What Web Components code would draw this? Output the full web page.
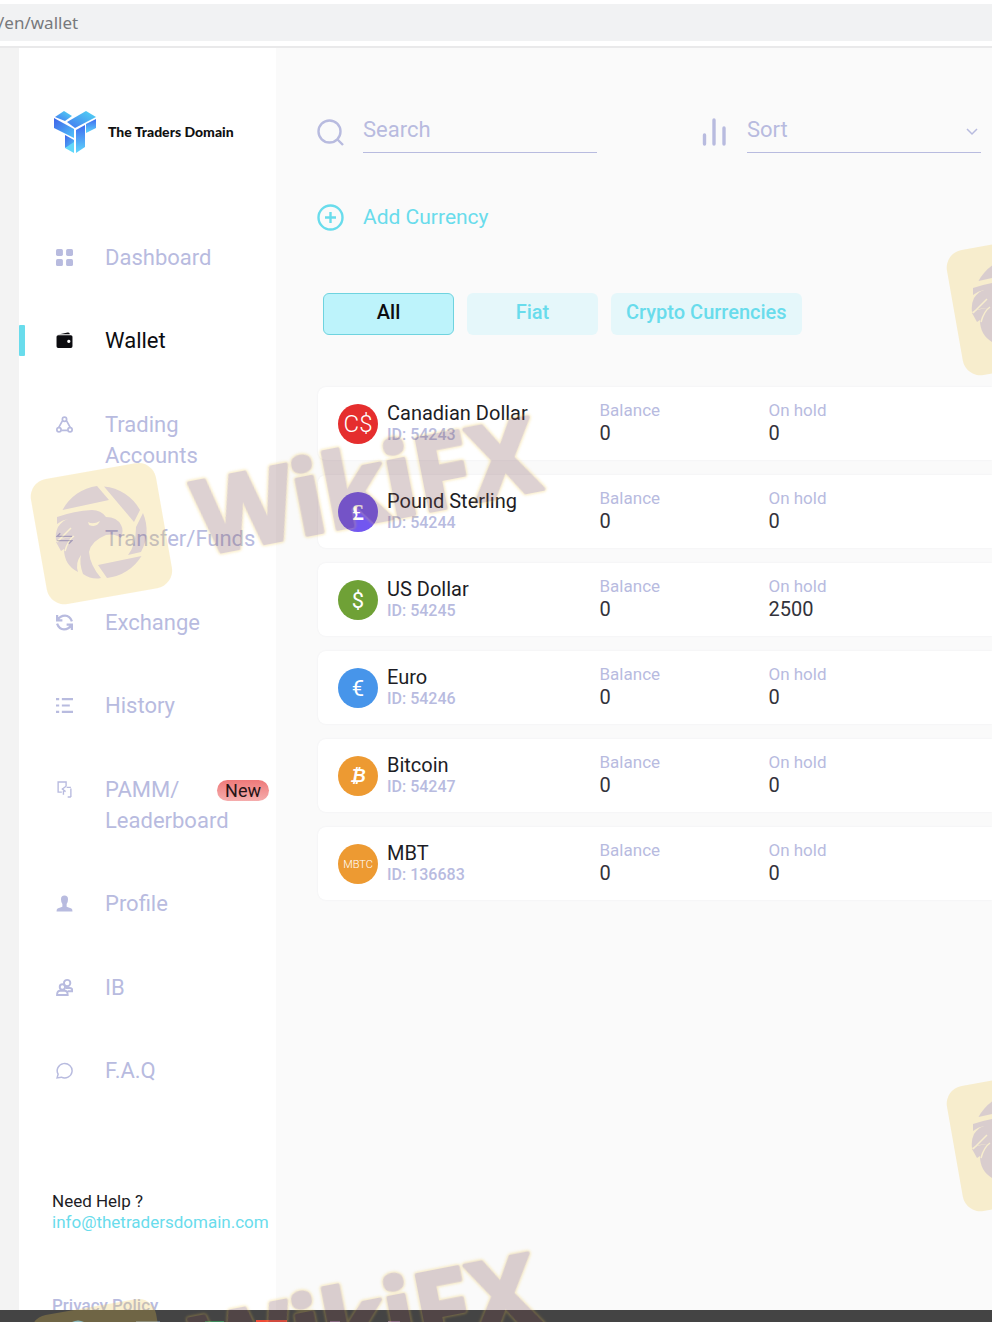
<!DOCTYPE html>
<html lang="en">
<head>
<meta charset="utf-8">
<title>Wallet</title>
<style>
  body {
    --accent: #69dcec;
    --muted: #b8bbdf;
    --page: #fafafa;
    margin: 0;
    height: 100vh;
    overflow: hidden;
    display: flex;
    flex-direction: column;
    position: relative;
    background: var(--page);
    font-family: Roboto, "Liberation Sans", sans-serif;
    color: #1d1d25;
  }
  .layout {
    display: flex;
    flex: 1;
    min-height: 0;
  }
</style>
</head>
<body>

<template id="address-bar">
  <style>
    :host {
      display: block;
      flex: none;
      padding: 4px 0 5px;
      background: #fff;
      border-bottom: 2px solid #e9e9ea;
    }
    .url {
      height: 37px;
      line-height: 37px;
      background: #f1f2f3;
      color: #77797c;
      font-family: "Noto Sans", sans-serif;
      font-size: 17px;
      text-indent: -2px;
    }
  </style>
  <div class="url"><slot></slot></div>
</template>

<template id="side-bar">
  <style>
    :host {
      display: flex;
      flex: none;
      flex-direction: column;
      box-sizing: border-box;
      width: 276px;
      padding-top: 59px;
      border-left: 19px solid #f3f3f3;
      background: #fff;
    }
    nav {
      display: flex;
      flex: 1;
      flex-direction: column;
      justify-content: space-between;
      padding: 86px 0 105px;
    }
    footer {
      display: flex;
      flex-direction: column;
      margin-bottom: -6px;
      padding-left: 33px;
      font-size: 17px;
      line-height: 21px;
    }
    .mail { color: var(--accent); text-decoration: none; }
    .policy {
      margin-top: 62px;
      color: var(--muted);
      font-weight: 500;
      text-decoration: none;
    }
  </style>
  <slot name="logo"></slot>
  <nav><slot></slot></nav>
  <footer>
    <span>Need Help ?</span>
    <a class="mail" href="mailto:info@thetradersdomain.com">info@thetradersdomain.com</a>
    <a class="policy" href="#privacy">Privacy Policy</a>
  </footer>
</template>

<template id="brand-logo">
  <style>
    :host {
      display: flex;
      align-items: center;
      gap: 11px;
      height: 49px;
      padding-left: 34px;
      font: 900 14px/20px Lato, sans-serif;
      color: #111;
    }
  </style>
  <svg width="44" height="44" viewBox="0 0 44 44" aria-hidden="true">
    <defs>
      <linearGradient id="a" x1="0" y1="0" x2="1" y2="1"><stop offset="0" stop-color="#3f63e8"/><stop offset="1" stop-color="#4fc3fa"/></linearGradient>
      <linearGradient id="b" x1="0" y1="1" x2="1" y2="0"><stop offset="0" stop-color="#4377f0"/><stop offset="1" stop-color="#52d8f4"/></linearGradient>
      <linearGradient id="c" x1="0" y1="0" x2="0" y2="1"><stop offset="0" stop-color="#3f6bf0"/><stop offset="1" stop-color="#5fd6fb"/></linearGradient>
    </defs>
    <path d="M2 7 11 1 19 6 12 11Z" fill="url(#b)"/>
    <path d="M1 8 21 19V28L1 18Z" fill="url(#a)"/>
    <path d="M14 12 33 1 43 7 22 18Z" fill="url(#b)"/>
    <path d="M23 20 32 15V37L23 43Z" fill="url(#c)"/>
    <path d="M33 14 43 9V18L33 23Z" fill="url(#c)"/>
    <path d="M12 25 21 30V35L12 38Z" fill="url(#a)"/>
    <path d="M12 38 21 32V43Z" fill="#62d8fa"/>
  </svg>
  <span><slot></slot></span>
</template>

<template id="nav-item">
  <style>
    :host { display: block; color: var(--muted); }
    :host([active]) { color: #0c0c10; }
    a {
      display: flex;
      position: relative;
      color: inherit;
      font-size: 22px;
      line-height: 31px;
      text-decoration: none;
    }
    i { width: 6px; border-radius: 1px; }
    :host([active]) i { background: var(--accent); }
    ::slotted(svg) {
      flex: none;
      width: 17px;
      height: 31px;
      margin: 0 32px 0 31px;
    }
    ::slotted(b) {
      position: absolute;
      top: 6px;
      right: 7px;
      padding: 0 8px;
      border-radius: 11px;
      background: linear-gradient(#ee7979, #f5adad);
      color: #241416;
      font-size: 18px;
      font-weight: 400;
      line-height: 21px;
    }
  </style>
  <a href="#"><i></i><slot name="icon"></slot><span><slot></slot></span><slot name="badge"></slot></a>
</template>

<template id="wallet-tools">
  <style>
    :host {
      display: flex;
      justify-content: space-between;
      gap: 24px;
      padding: 0 11px 0 41px;
      color: var(--muted);
    }
    label {
      display: flex;
      flex: 0 1 280px;
      align-items: center;
      position: relative;
      min-width: 0;
    }
    svg { flex: none; }
    input, select {
      flex: 1;
      box-sizing: border-box;
      min-width: 0;
      height: 42px;
      margin: 0 0 0 19px;
      padding: 0 0 4px;
      border: 0;
      border-bottom: 1px solid var(--muted);
      border-radius: 0;
      outline: 0;
      appearance: none;
      background: none;
      color: inherit;
      font: 22px/30px Roboto, sans-serif;
    }
    input::placeholder { color: inherit; opacity: 1; }
    .arrow {
      position: absolute;
      right: 3px;
      pointer-events: none;
    }
  </style>
  <label>
    <svg width="27" height="27" viewBox="0 0 27 27" fill="none" stroke="currentColor" stroke-width="2.400" aria-hidden="true"><circle cx="12.500" cy="12.500" r="11"/><path d="m20.500 20.500 5.500 5.500"/></svg>
    <input type="search" placeholder="Search" aria-label="Search">
  </label>
  <label>
    <svg width="27" height="30" viewBox="0 0 27 30" stroke="currentColor" stroke-width="3.400" stroke-linecap="round" aria-hidden="true"><path d="M3.500 18v9M13 3v24M23 11v16"/></svg>
    <select aria-label="Sort"><option>Sort</option></select>
    <svg class="arrow" width="12" height="8" viewBox="0 0 12 8" fill="none" stroke="currentColor" stroke-width="1.500" aria-hidden="true"><path d="m1 1 5 5 5-5"/></svg>
  </label>
</template>

<template id="add-currency">
  <style>
    :host { display: block; padding: 50px 41px 0; }
    button {
      display: flex;
      align-items: center;
      gap: 19px;
      padding: 0;
      border: 0;
      background: none;
      color: var(--accent);
      font: 21px/29px Roboto, sans-serif;
    }
  </style>
  <button type="button">
    <svg width="27" height="27" viewBox="0 0 27 27" fill="none" stroke="currentColor" stroke-width="2.400" aria-hidden="true"><circle cx="13.500" cy="13.500" r="12"/><path d="M13.500 8v11M8 13.500h11"/></svg>
    <slot></slot>
  </button>
</template>

<template id="filter-tab">
  <style>
    :host { display: block; }
    button {
      box-sizing: border-box;
      min-width: 131px;
      height: 42px;
      padding: 0 14px 4px;
      border: 1px solid transparent;
      border-radius: 6px;
      background: #e5f7fa;
      color: var(--accent);
      font: 500 20px/28px Roboto, sans-serif;
    }
    :host([active]) button {
      border-color: #6ed3df;
      background: #bdf3fb;
      color: #0c0c10;
    }
  </style>
  <button type="button"><slot></slot></button>
</template>

<template id="filter-tabs">
  <style>
    :host {
      display: flex;
      flex-wrap: wrap;
      gap: 13px;
      padding: 61px 47px 52px;
    }
  </style>
  <slot></slot>
</template>

<template id="wallet-card">
  <style>
    :host {
      display: grid;
      grid-template-columns: 40px minmax(0, 14fr) minmax(0, 11fr) minmax(0, 14fr);
      column-gap: 9px;
      padding: 12px 20px 15px;
      border-radius: 8px 0 0 8px;
      background: #fff;
      box-shadow: 0 0 2px #ececef;
      line-height: 23px;
    }
    .coin {
      display: flex;
      align-items: center;
      justify-content: center;
      height: 40px;
      margin-top: 5px;
      border-radius: 50%;
      background: var(--coin);
      color: #fff;
      font-size: 22px;
    }
    .light { font-size: 24px; font-weight: 300; }
    .small { font-size: 11px; font-weight: 300; }
    .serif { font: bold 24px "Liberation Serif", serif; }
    .bitcoin { font: italic bold 18px "DejaVu Sans", sans-serif; }
    dl { margin: 0; font-size: 20px; color: #33333b; }
    dt { font-size: 17px; color: var(--muted); }
    dd { margin: 0; }
    .title { padding-top: 4px; line-height: 21px; }
    .title dt { font-size: 20px; color: #1d1d25; }
    .title dd { font-size: 16px; font-weight: 500; color: var(--muted); }
  </style>
  <div class="coin"><span></span></div>
  <dl class="title"><dt><slot></slot></dt><dd class="id"></dd></dl>
  <dl><dt>Balance</dt><dd class="balance"></dd></dl>
  <dl><dt>On hold</dt><dd class="hold"></dd></dl>
</template>

<template id="wallet-list">
  <style>
    :host {
      display: flex;
      flex-direction: column;
      gap: 15px;
      padding-left: 42px;
    }
  </style>
  <slot></slot>
</template>

<template id="wallet-page">
  <style>
    :host { display: block; flex: 1; min-width: 0; padding-top: 63px; }
  </style>
  <slot></slot>
</template>

<template id="task-bar">
  <style>
    :host { display: block; flex: none; height: 12px; background: #444; }
    svg { display: block; }
  </style>
  <svg width="420" height="12" viewBox="0 0 420 12" aria-hidden="true">
    <path d="M72 12q6-3 12 0Z" fill="#6fb9e8"/>
    <path d="M136 11h24v1h-24Z" fill="#6c7a8a"/>
    <path d="M205 11h19v1h-19Z" fill="#3f8a5c"/>
    <path d="M256 10h31v2h-31Z" fill="#ee4a37"/>
    <path d="M330 11h10v1h-10ZM388 11h12v1h-12Z" fill="#8b7291"/>
  </svg>
</template>

<template id="water-mark">
  <style>
    :host {
      position: absolute;
      inset: 0;
      overflow: hidden;
      pointer-events: none;
    }
    svg { display: block; opacity: .25; }
    text {
      font: bold 102px "Noto Sans", sans-serif;
      fill: #7b4b4f;
      stroke: #7b4b4f;
      stroke-width: 4px;
      stroke-linejoin: round;
      filter: drop-shadow(0 0 1px #efc74b) drop-shadow(0 0 1px #efc74b) drop-shadow(0 0 1px #efc74b);
    }
  </style>
  <svg width="992" height="1322" viewBox="0 0 992 1322" aria-hidden="true">
    <defs>
      <g id="badge">
        <rect x="38" y="470" width="127" height="127" rx="18" fill="#efc74b" transform="rotate(-10 102 534)"/>
        <g fill="#7b4b4f">
          <path d="M62.500 510A46 46 0 0 1 97 486L109 500Z"/>
          <path d="M104 486.500A46 46 0 0 1 140 510L134 522Z"/>
          <path d="M143 513A46 46 0 0 1 141 552L128 555Q136 545 136 527Z"/>
          <path d="M98 565 141.500 556A46 46 0 0 1 107 578Z"/>
          <path d="M57 517Q74 511 92 510 101 510 106 517 117 517 121 525 124 530 121 538 115 533 106 535 91 541 89 552 90 565 101 578 92 580 83 574 79 563 81 555 75 563 78 572 64 565 64 549L61 551 56 542Q60 538 72 537 62 537 56 541 55 533 58 527 63 520 68 519 62 520 57 524Z"/>
        </g>
        <path d="M88 522Q93 525 100 521 97 528 89 525Z" fill="#efc74b"/>
        <path d="M57 542 71 528M65 551Q68 540 74 536" fill="none" stroke="#efc74b" stroke-width="1.500"/>
      </g>
    </defs>
    <use href="#badge"/>
    <text transform="translate(203 555) rotate(-11)">WikiFX</text>
    <use href="#badge" x="916" y="-229"/>
    <use href="#badge" x="916" y="607"/>
    <use href="#badge" y="836"/>
    <text transform="translate(203 1391) rotate(-11)">WikiFX</text>
  </svg>
</template>

<address-bar>/en/wallet</address-bar>

<div class="layout">
  <side-bar>
    <brand-logo slot="logo">The Traders Domain</brand-logo>
    <nav-item>
      <svg slot="icon" viewBox="0 0 16 16" fill="currentColor"><rect width="6.500" height="6.500" rx="1.500"/><rect x="9.500" width="6.500" height="6.500" rx="1.500"/><rect y="9.500" width="6.500" height="6.500" rx="1.500"/><rect x="9.500" y="9.500" width="6.500" height="6.500" rx="1.500"/></svg>
      Dashboard
    </nav-item>
    <nav-item active>
      <svg slot="icon" viewBox="0 0 16 16" fill="currentColor"><path d="M1 2.500 11 .5q2-.3 2 1.500H4Z"/><path fill-rule="evenodd" d="M2 3h12q1.500 0 1.500 1.500v9q0 1.500-1.500 1.500H2Q.5 15 .5 13.500v-9Q.5 3 2 3ZM12 7.300a1.500 1.500 0 1 0 .1 0Z"/></svg>
      Wallet
    </nav-item>
    <nav-item>
      <svg slot="icon" viewBox="0 0 16 16" fill="none" stroke="currentColor" stroke-width="1.600"><path d="M6 4.500 2.500 11M10 4.500l3.500 6.500M5 13.500h6"/><circle cx="8" cy="3" r="2"/><circle cx="2.800" cy="13" r="2"/><circle cx="13.200" cy="13" r="2"/></svg>
      Trading<br>Accounts
    </nav-item>
    <nav-item>
      <svg slot="icon" viewBox="0 0 16 16" fill="none" stroke="currentColor" stroke-width="1.400"><path d="M4 3 1 6h14M1 10h14l-3 3"/></svg>
      Transfer/Funds
    </nav-item>
    <nav-item>
      <svg slot="icon" viewBox="0 0 16 16" fill="none" stroke="currentColor" stroke-width="2.200"><path d="M1 1v5h5M1.500 5.500Q4 1.500 8.500 1.500T15 7M15 15v-5h-5M14.500 10.500Q12 14.500 7.500 14.500T1 9"/></svg>
      Exchange
    </nav-item>
    <nav-item>
      <svg slot="icon" viewBox="0 0 16 16" fill="none" stroke="currentColor" stroke-width="2"><path d="M0 2h3M5.500 2H16M0 8h3M5.500 8H13M0 14h3M5.500 14H16"/></svg>
      History
    </nav-item>
    <nav-item>
      <svg slot="icon" viewBox="0 0 16 16" fill="none" stroke="currentColor" stroke-width="1.300"><path d="M5.500 10.500H2V1h7.500v4M9.500 5 6 7.500 9 10M7 8v5M10 6h4M14 7v8M11 15h3"/></svg>
      PAMM/<br>Leaderboard
      <b slot="badge">New</b>
    </nav-item>
    <nav-item>
      <svg slot="icon" viewBox="0 0 16 16" fill="currentColor"><path d="M8 .5q3.300 0 3.300 3.500 0 3-1.300 4.500v2.500l4.500 1.800q1 .5 1 2.700H.5q0-2.200 1-2.700L6 11V8.500Q4.700 7 4.700 4 4.700.5 8 .5Z"/></svg>
      Profile
    </nav-item>
    <nav-item>
      <svg slot="icon" viewBox="0 0 16 16" fill="none" stroke="currentColor" stroke-width="1.800"><circle cx="10.500" cy="3.800" r="3"/><circle cx="6" cy="7.500" r="2.500"/><path d="M1 15q0-4 3-4h4q3 0 3 4ZM9 8.500h4q2.500 0 2.500 3H11"/></svg>
      IB
    </nav-item>
    <nav-item>
      <svg slot="icon" viewBox="0 0 16 16" fill="none" stroke="currentColor" stroke-width="1.400"><path d="M1 15 2 11.500A7 6.800 0 1 1 5 14.300Z"/></svg>
      F.A.Q
    </nav-item>
  </side-bar>

  <wallet-page>
    <wallet-tools></wallet-tools>
    <add-currency>Add Currency</add-currency>
    <filter-tabs>
      <filter-tab active>All</filter-tab>
      <filter-tab>Fiat</filter-tab>
      <filter-tab>Crypto Currencies</filter-tab>
    </filter-tabs>
    <wallet-list>
      <wallet-card symbol="C$" look="light" color="#e52e2e" number="54243">Canadian Dollar</wallet-card>
      <wallet-card symbol="£" look="serif" color="#7257f0" number="54244">Pound Sterling</wallet-card>
      <wallet-card symbol="$" color="#6fa136" number="54245" hold="2500">US Dollar</wallet-card>
      <wallet-card symbol="€" color="#4795ea" number="54246">Euro</wallet-card>
      <wallet-card symbol="₿" look="bitcoin" color="#ed9a32" number="54247">Bitcoin</wallet-card>
      <wallet-card symbol="MBTC" look="small" color="#ed9a32" number="136683">MBT</wallet-card>
    </wallet-list>
  </wallet-page>
</div>

<task-bar></task-bar>
<water-mark></water-mark>

<script>
  (function() {
    class TemplateElement extends HTMLElement {
      constructor() {
        super();
        let tmpl = document.getElementById(this.localName);
        this.attachShadow({mode: 'open'}).appendChild(document.importNode(tmpl.content, true));
      }
    }

    class WalletCard extends TemplateElement {
      connectedCallback() {
        let coin = this.shadowRoot.querySelector('.coin');
        let symbol = coin.querySelector('span');
        coin.style.setProperty('--coin', this.getAttribute('color'));
        symbol.textContent = this.getAttribute('symbol');
        symbol.className = this.getAttribute('look') || '';
        this.setText('.id', 'ID: ' + this.getAttribute('number'));
        this.setText('.balance', this.getAttribute('balance') || '0');
        this.setText('.hold', this.getAttribute('hold') || '0');
      }
      setText(selector, text) {
        this.shadowRoot.querySelector(selector).textContent = text;
      }
    } // Class WalletCard

    customElements.define('wallet-card', WalletCard);
    ['address-bar', 'side-bar', 'brand-logo', 'nav-item', 'wallet-tools', 'add-currency',
      'filter-tab', 'filter-tabs', 'wallet-list', 'wallet-page', 'task-bar', 'water-mark'
    ].forEach(name => customElements.define(name, class extends TemplateElement {}));
  })();
</script>
</body>
</html>
